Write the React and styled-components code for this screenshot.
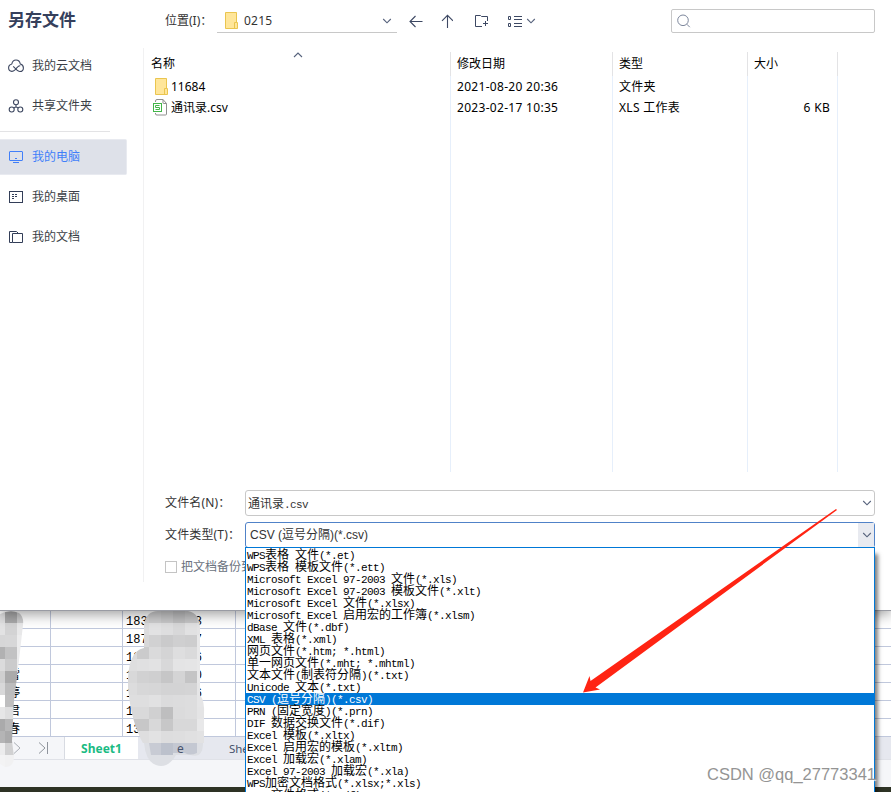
import styled, { createGlobalStyle, css } from "styled-components";

const FILE_TYPES = [
  "WPS表格 文件(*.et)",
  "WPS表格 模板文件(*.ett)",
  "Microsoft Excel 97-2003 文件(*.xls)",
  "Microsoft Excel 97-2003 模板文件(*.xlt)",
  "Microsoft Excel 文件(*.xlsx)",
  "Microsoft Excel 启用宏的工作簿(*.xlsm)",
  "dBase 文件(*.dbf)",
  "XML 表格(*.xml)",
  "网页文件(*.htm; *.html)",
  "单一网页文件(*.mht; *.mhtml)",
  "文本文件(制表符分隔)(*.txt)",
  "Unicode 文本(*.txt)",
  "CSV (逗号分隔)(*.csv)",
  "PRN (固定宽度)(*.prn)",
  "DIF 数据交换文件(*.dif)",
  "Excel 模板(*.xltx)",
  "Excel 启用宏的模板(*.xltm)",
  "Excel 加载宏(*.xlam)",
  "Excel 97-2003 加载宏(*.xla)",
  "WPS加密文档格式(*.xlsx;*.xls)",
  "PDF 文件格式(*.pdf)",
];

const SHEET_ROWS = [
  { name: "", start: "183", end: "3" },
  { name: "", start: "187", end: "7" },
  { name: "", start: "13", end: "6" },
  { name: "雷", start: "1", end: "0" },
  { name: "婷", start: "1", end: "6" },
  { name: "君", start: "1", end: "" },
  { name: "春", start: "13", end: "" },
];

// grey levels of the censored blocks, one array per 12px row
const NAME_MOSAIC = [
  [222, 168, 203],
  [226, 211, 232],
  [214, 215, 236],
  [177, 194, 236],
  [219, 203, 236],
  [207, 170, 225],
  [216, 188, 225],
  [255, 190, 225],
  [230, 222, 225],
  [170, 183, 225],
  [180, 170, 225],
  [236, 209, 225],
  [243, 241, 243],
  [243, 243, 243],
];

const PHONE_MOSAIC = [
  [210, 210, 205, 199, 190, 197, 205],
  [220, 220, 226, 222, 216, 225, 228],
  [215, 215, 209, 202, 207, 205, 232],
  [218, 203, 218, 212, 222, 218, 232],
  [222, 224, 226, 216, 228, 229, 232],
  [216, 209, 207, 198, 212, 196, 232],
  [220, 215, 214, 211, 211, 212, 230],
  [222, 222, 225, 219, 220, 221, 229],
  [217, 217, 208, 190, 219, 221, 228],
  [199, 199, 216, 199, 216, 216, 232],
  [222, 222, 226, 221, 222, 224, 226],
];

function Chevron({ up }) {
  return (
    <svg width="10" height="6" viewBox="0 0 10 6" fill="none" stroke="#56627c" strokeWidth="1.1">
      <path d={up ? "M1 5l4-4 4 4" : "M1.2 1L5 4.8 8.8 1"} />
    </svg>
  );
}

function FolderIcon() {
  return (
    <svg width="14" height="17" viewBox="0 0 14 17">
      <path d="M1.5.5h11v10h1v6h-12z" fill="#ffe69a" stroke="#eac54f" />
      <path d="M10.5 16v-5.5h2V.8" fill="none" stroke="#eac54f" />
    </svg>
  );
}

function SheetFileIcon() {
  return (
    <svg width="15" height="17" viewBox="0 0 15 17" fill="none">
      <path d="M2.5 3V2q0-1.5 1.5-1.5h6l3.5 4V15q0 1-1 1H4q-1.5 0-1.5-1v-1" stroke="#8f8f8f" />
      <path d="M10 .5V4q0 .5.5.5h3" stroke="#8f8f8f" />
      <rect x=".5" y="4.5" width="8" height="8" fill="#fff" stroke="#43b649" />
      <path d="M6.5 6.5h-4v2h4v2h-4" stroke="#43b649" />
    </svg>
  );
}

function CloudIcon() {
  return (
    <svg width="16" height="14" viewBox="0 0 16 14" fill="none" stroke="#3d4760" strokeWidth="1.1">
      <path d="M3.8 5.2Q.6 5.7.6 8.8q0 3.5 3.3 3.6 1.5 0 2.8-1.2l3-3.2q1-1.2 2.6-1.2" />
      <path d="M3.8 5.2Q4.4 1 8 1t4.3 4q3.1.8 3.1 3.9 0 3.6-3.6 3.6-1.5 0-2.8-1.3L5.2 7.4" />
    </svg>
  );
}

function ShareIcon() {
  return (
    <svg width="16" height="14" viewBox="0 0 16 14" fill="none" stroke="#3d4760" strokeWidth="1.1">
      <circle cx="8" cy="3.2" r="2.5" />
      <circle cx="3.7" cy="10.5" r="2.5" />
      <circle cx="12.3" cy="10.5" r="2.5" />
      <path d="M8 5.7v2M6 9l2-1.3L10 9" />
    </svg>
  );
}

function ComputerIcon() {
  return (
    <svg width="16" height="14" viewBox="0 0 16 14" fill="none" stroke="#417ff9">
      <rect x="1.5" y="1.5" width="13" height="9" rx=".5" />
      <path d="M5 12.5h6M7 8.5h2" />
    </svg>
  );
}

function DesktopIcon() {
  return (
    <svg width="16" height="14" viewBox="0 0 16 14" fill="none" stroke="#333e58">
      <rect x="1.5" y="1.5" width="13" height="11" />
      <path d="M4 4.5h2M7 4.5h2M4 6.5h2M7 6.5h2M4 8.5h2" />
    </svg>
  );
}

function DocumentsIcon() {
  return (
    <svg width="16" height="14" viewBox="0 0 16 14" fill="none" stroke="#333e58">
      <path d="M4.5 12.5h-3v-11h7l1.5 1.5M4.5 3.5h10v9h-10z" />
    </svg>
  );
}

const PLACES = [
  { label: "我的云文档", icon: <CloudIcon /> },
  { label: "共享文件夹", icon: <ShareIcon /> },
  { label: "我的电脑", icon: <ComputerIcon />, active: true },
  { label: "我的桌面", icon: <DesktopIcon /> },
  { label: "我的文档", icon: <DocumentsIcon /> },
];

function Toolbar() {
  return (
    <Header>
      <Title>另存文件</Title>
      <LocationLabel>位置(I)：</LocationLabel>
      <Location>
        <FolderIcon />
        <span>0215</span>
        <Chevron />
      </Location>
      <Tools>
        <svg width="14" height="14" viewBox="0 0 14 14" fill="none" stroke="#3d4863" strokeWidth="1.1">
          <path d="M13.5 7.5H1M6.5 2L1 7.5 6.5 13" />
        </svg>
        <svg width="12" height="14" viewBox="0 0 12 14" fill="none" stroke="#3d4863" strokeWidth="1.1">
          <path d="M6.5 14V1.5M1 6.8l5.500-5.500L12 6.800" />
        </svg>
        <svg width="15" height="14" viewBox="0 0 15 14" fill="none" stroke="#3d4863">
          <path d="M8 12.5H1.5v-11h5l1 1h6V7M9 9.5h5M11.5 7v5" />
        </svg>
        <ViewMode>
          <svg width="15" height="13" viewBox="0 0 15 13" fill="none" stroke="#3d4863">
            <path d="M1.5 1.5h2v3h-2zM1.5 8.5h2v3h-2zM7 1.5h8M7 4.5h8M7 8.5h8M7 11.5h8" />
          </svg>
          <Chevron />
        </ViewMode>
      </Tools>
      <Search>
        <svg width="14" height="14" viewBox="0 0 14 14" fill="none" stroke="#7d879c">
          <circle cx="6" cy="6.3" r="5.3" />
          <path d="M9.8 10.2l3 3" />
        </svg>
      </Search>
    </Header>
  );
}

function FileList() {
  return (
    <List>
      <Column $width={308} $indent={8}>
        <ColumnHead>
          名称
          <SortMark>
            <Chevron up />
          </SortMark>
        </ColumnHead>
        <Cell $icon>
          <FolderIcon />
          11684
        </Cell>
        <Cell $icon>
          <SheetFileIcon />
          通讯录.csv
        </Cell>
      </Column>
      <Column $width={162} $indent={6}>
        <ColumnHead>修改日期</ColumnHead>
        <Cell>2021-08-20 20:36</Cell>
        <Cell>2023-02-17 10:35</Cell>
      </Column>
      <Column $width={135} $indent={6}>
        <ColumnHead>类型</ColumnHead>
        <Cell>文件夹</Cell>
        <Cell>XLS 工作表</Cell>
      </Column>
      <Column $width={90} $indent={6}>
        <ColumnHead>大小</ColumnHead>
        <Cell />
        <Cell $right>6 KB</Cell>
      </Column>
    </List>
  );
}

// half-width runs are set smaller so that they take 6px next to 12px hanzi
function MixedText({ children }) {
  return children
    .split(/([\x20-\x7e]+)/)
    .map((part, i) => (i % 2 ? <Latin key={i}>{part}</Latin> : part));
}

function SaveForm() {
  return (
    <Form>
      <Field>
        <FieldLabel>文件名(N)：</FieldLabel>
        <Input $mono>
          <InputText>
            <MixedText>通讯录.csv</MixedText>
          </InputText>
          <DropButton>
            <Chevron />
          </DropButton>
        </Input>
      </Field>
      <Field>
        <FieldLabel>文件类型(T)：</FieldLabel>
        <Input $focus>
          <InputText>CSV (逗号分隔)(*.csv)</InputText>
          <DropButton $open>
            <Chevron />
          </DropButton>
          <Options>
            {FILE_TYPES.map((type) => (
              <Option key={type} $selected={type.startsWith("CSV")}>
                <MixedText>{type}</MixedText>
              </Option>
            ))}
          </Options>
        </Input>
      </Field>
      <Backup>
        <Checkbox />
        把文档备份到云
      </Backup>
    </Form>
  );
}

function Mosaic({ id, rows, outline, x }) {
  return (
    <>
      <clipPath id={id}>
        <path d={outline} />
      </clipPath>
      <g clipPath={`url(#${id})`} shapeRendering="crispEdges">
        {rows.map((row, r) =>
          row.map((v, c) => (
            <rect
              key={`${r}-${c}`}
              x={x + c * 12}
              y={r * 12}
              width="12"
              height="12"
              fill={`rgb(${v},${v},${v + 1})`}
            />
          ))
        )}
      </g>
    </>
  );
}

function Worksheet() {
  return (
    <Sheet>
      {SHEET_ROWS.map((row, i) => (
        <SheetRow key={i}>
          <SheetCell $width={51}>{row.name}</SheetCell>
          <SheetCell $width={72} />
          <SheetCell $width={113} $phone>
            <span>{row.start}</span>
            <span>{row.end}</span>
          </SheetCell>
          <SheetCell $grow />
          <SheetCell $width={8} $last />
        </SheetRow>
      ))}
      <Tabs>
        <TabNav>
          <svg width="8" height="12" viewBox="0 0 8 12" fill="none" stroke="#aaaeb5">
            <path d="M1 .5L7 6 1 11.5" />
          </svg>
          <svg width="11" height="12" viewBox="0 0 11 12" fill="none" stroke="#8f949c">
            <path d="M1 .5L7 6 1 11.5M9.5 0v12" />
          </svg>
        </TabNav>
        <Tab $active>Sheet1</Tab>
        <Tab />
        <Tab>Sheet3</Tab>
      </Tabs>
      <StatusBar />
      <Censor width="240" height="160" viewBox="0 0 240 160">
        <Mosaic
          id="names"
          x={-7}
          rows={NAME_MOSAIC}
          outline="M0 3Q10-2 19 2 24 6 23 14L18 58 14 90 12 130 14 146Q14 156 5 156L0 153z"
        />
        <Mosaic
          id="phones"
          x={125}
          rows={PHONE_MOSAIC}
          outline="M144 14Q146 0 158 0H188Q200 2 200 18V84Q205 90 204 105V134H144Q131 112 128 76 127 40 144 37z"
        />
        <path d="M144 132H203Q203 148 190 144H176Q168 158 156 154 146 151 144 132z" fill="#dddfe4" />
        <path d="M149 132h12v12h-10z" fill="#c8cbd4" />
        <path d="M161 132h12v12h-12z" fill="#bcc1cc" />
        <path d="M173 132h24v10q-7 3-12 0h-12z" fill="#c4c8d2" />
        <text x="177" y="142" fontFamily="Noto Sans" fontSize="12" fill="#46526c">e</text>
      </Censor>
    </Sheet>
  );
}

function App() {
  return (
    <Screen>
      <GlobalStyle />
      <Dialog>
        <Toolbar />
        <Body>
          <Sidebar>
            {PLACES.map((place, i) => (
              <Place key={place.label} $active={place.active} $divided={i === 1}>
                {place.icon}
                {place.label}
              </Place>
            ))}
          </Sidebar>
          <Main>
            <FileList />
            <SaveForm />
          </Main>
        </Body>
      </Dialog>
      <Worksheet />
      <Pointer width="270" height="200" viewBox="0 0 270 200">
        <path d="M256 1L257 2 15.5 179.5 20 181.5 3 184.5 9.5 168 10.5 173z" fill="#ff2413" />
      </Pointer>
      <Watermark>CSDN @qq_27773341</Watermark>
    </Screen>
  );
}

export default App;

const GlobalStyle = createGlobalStyle`
  * {
    box-sizing: border-box;
  }

  body {
    margin: 0;
    overflow: hidden;
    font: 12px/16px "Noto Sans", "Noto Sans CJK SC", sans-serif;
  }

  svg {
    display: block;
    flex: none;
  }
`;

const Screen = styled.div`
  position: relative;
  width: 891px;
  height: 792px;
  overflow: hidden;
  display: flex;
  flex-direction: column;
  background: #fff;
`;

const Dialog = styled.div`
  position: relative;
  z-index: 2;
  flex: none;
  height: 611px;
  display: flex;
  flex-direction: column;
  background: #fff;
  border-bottom: 1px solid #999ba3;
  box-shadow: 0 3px 13px rgba(0, 0, 0, 0.4);
`;

const Header = styled.div`
  display: flex;
  align-items: center;
  height: 42px;
  padding: 0 16px 0 8px;
`;

const Title = styled.h1`
  width: 157px;
  margin: 0;
  font-size: 17px;
  line-height: 24px;
  font-weight: 700;
  color: #35405c;
  padding-bottom: 2px;
`;

const LocationLabel = styled.span`
  width: 52px;
  color: #333;
  white-space: nowrap;
`;

const Location = styled.div`
  display: flex;
  align-items: center;
  width: 180px;
  height: 24px;
  padding: 0 5px 0 7px;
  border-bottom: 1px solid #c8c8c8;
  color: #333;

  span {
    flex: 1;
    margin-left: 6px;
    letter-spacing: 0.2px;
  }
`;

const Tools = styled.div`
  display: flex;
  align-items: center;
  gap: 18px;
  margin-left: 12px;

  > :nth-child(3) {
    margin-left: 3px;
  }
`;

const ViewMode = styled.div`
  display: flex;
  align-items: center;
  gap: 4px;
`;

const Search = styled.div`
  display: flex;
  align-items: center;
  width: 204px;
  height: 24px;
  margin-left: auto;
  padding-left: 5px;
  border: 1px solid #c8c8c8;
  border-radius: 2px;
`;

const Body = styled.div`
  display: flex;
  flex: 1;
`;

const Sidebar = styled.div`
  width: 144px;
  height: 534px;
  margin-top: 6px;
  border-right: 1px solid #f1f1f2;
`;

const Place = styled.div`
  display: flex;
  align-items: center;
  gap: 8px;
  width: 127px;
  height: 36px;
  margin-bottom: 4px;
  padding-left: 8px;
  border: 1px solid transparent;
  border-left: 0;
  border-radius: 0 2px 2px 0;
  color: #3b3f47;

  ${({ $active }) =>
    $active &&
    css`
      background: #dee1e9;
      border-color: #e8eaf0;
      color: #417ff9;
    `}

  ${({ $divided }) =>
    $divided &&
    css`
      margin-bottom: 15px;

      &::after {
        content: "";
        width: 110px;
        height: 1px;
        margin: 51px 0 0 -100px;
        background: #e3e3e5;
      }
    `}
`;

const Main = styled.div`
  flex: 1;
  padding: 10px 16px 0 0;
`;

const List = styled.div`
  display: flex;
  height: 420px;
  margin-left: -1px;
  color: #000;
`;

const Column = styled.div`
  width: ${({ $width }) => $width}px;
  background: linear-gradient(#e3e3e5 24px, #e6effb 24px) right / 1px 100% no-repeat;

  > div {
    padding-left: ${({ $indent }) => $indent}px;
  }
`;

const ColumnHead = styled.div`
  position: relative;
  height: 24px;
  line-height: 23px;
`;

const SortMark = styled.span`
  position: absolute;
  top: 0;
  left: 150px;
`;

const Cell = styled.div`
  display: flex;
  align-items: center;
  gap: 3px;
  height: 21px;
  letter-spacing: 0.3px;

  ${({ $icon }) =>
    $icon &&
    css`
      letter-spacing: 0;

      svg {
        margin-left: 3px;
      }

      svg[width="15"] {
        margin-left: 2px;
      }
    `}

  ${({ $right }) =>
    $right &&
    css`
      justify-content: flex-end;
      padding-right: 8px;
    `}
`;

const Form = styled.div`
  display: flex;
  flex-direction: column;
  gap: 6px;
  padding: 18px 0 0 21px;
`;

const Field = styled.div`
  display: flex;
  align-items: center;
`;

const FieldLabel = styled.label`
  width: 80px;
  color: #333;
  letter-spacing: 0.15px;
  white-space: nowrap;
`;

const Input = styled.div`
  position: relative;
  display: flex;
  flex: 1;
  height: 26px;
  padding-left: ${({ $mono }) => ($mono ? 2 : 4)}px;
  border: 1px solid ${({ $focus }) => ($focus ? "#5082c8" : "#c8c8c8")};
  border-radius: 3px;
  color: #333;
  font-family: ${({ $mono }) =>
    $mono ? '"Noto Sans CJK SC", sans-serif' : '"Liberation Sans", "Noto Sans CJK SC", sans-serif'};
`;

const InputText = styled.span`
  flex: 1;
  line-height: 24px;
`;

const DropButton = styled.span`
  display: grid;
  place-items: center;
  width: 16px;
  padding-left: 1px;
  background: ${({ $open }) => ($open ? "#e8eaf0" : "transparent")};
`;

const Options = styled.div`
  position: absolute;
  z-index: 3;
  top: 24px;
  left: -1px;
  width: 630px;
  padding: 1px 0;
  border: 1px solid #0078d7;
  background: #fff;
  box-shadow: 4px 6px 4px -1px rgba(0, 0, 0, 0.5);
  color: #000;
`;

const Option = styled.div`
  height: 12px;
  padding-left: 1px;
  font-family: "Noto Sans CJK SC", sans-serif;
  line-height: 10px;
  white-space: pre;
  background: ${({ $selected }) => ($selected ? "#0078d7" : "transparent")};
  color: ${({ $selected }) => ($selected ? "#fff" : "#000")};
`;

const Latin = styled.span`
  font-family: "Liberation Mono", monospace;
  font-size: 11px;
  letter-spacing: -0.6px;
`;

const Backup = styled.div`
  display: flex;
  align-items: center;
  gap: 4px;
  margin-top: 5px;
  color: #6b7280;
`;

const Checkbox = styled.span`
  width: 12px;
  height: 12px;
  border: 1px solid #c4c4c4;
`;

const Sheet = styled.div`
  position: relative;
  flex: 1;
`;

const SheetRow = styled.div`
  display: flex;
  height: 18px;
`;

const SheetCell = styled.div`
  flex: ${({ $grow }) => ($grow ? 1 : "none")};
  width: ${({ $width }) => $width}px;
  padding: 0 33px 0 3px;
  border: solid #c0c8dc;
  border-width: 0 ${({ $last }) => ($last ? 0 : 1)}px 1px 0;
  font: 12px/22px "Liberation Mono", "Noto Sans CJK SC", monospace;
  text-align: right;

  &:first-child {
    padding-right: 30px;
  }

  ${({ $phone }) =>
    $phone &&
    css`
      display: flex;
      justify-content: space-between;
    `}
`;

const Tabs = styled.div`
  display: flex;
  align-items: stretch;
  height: 23px;
  background: #e6e8ef;
  border-bottom: 1px solid #e0e2e8;
`;

const TabNav = styled.div`
  display: flex;
  align-items: center;
  gap: 17px;
  width: 65px;
  padding-left: 13px;
  background: #f5f6f9;
  border-right: 1px solid #d8dbe2;
`;

const Tab = styled.div`
  width: 73px;
  line-height: 23px;
  text-align: center;
  font-size: ${({ $active }) => ($active ? 12 : 11.5)}px;
  font-weight: ${({ $active }) => ($active ? 700 : 400)};
  color: ${({ $active }) => ($active ? "#1abb83" : "#46526c")};
  background: ${({ $active }) => ($active ? "#fff" : "transparent")};
`;

const StatusBar = styled.div`
  height: 32px;
  background: #f5f6f9;
  border-bottom: 5px solid #2e3325;
`;

const Censor = styled.svg`
  position: absolute;
  top: 0;
  left: 0;
`;

const Pointer = styled.svg`
  position: absolute;
  z-index: 4;
  top: 508px;
  left: 580px;
`;

const Watermark = styled.div`
  position: absolute;
  z-index: 5;
  right: 15px;
  bottom: 8px;
  font: 16.5px/20px "Liberation Sans", sans-serif;
  color: #949494;
  text-shadow: 1px 1px 1px rgba(255, 255, 255, 0.8);
`;
